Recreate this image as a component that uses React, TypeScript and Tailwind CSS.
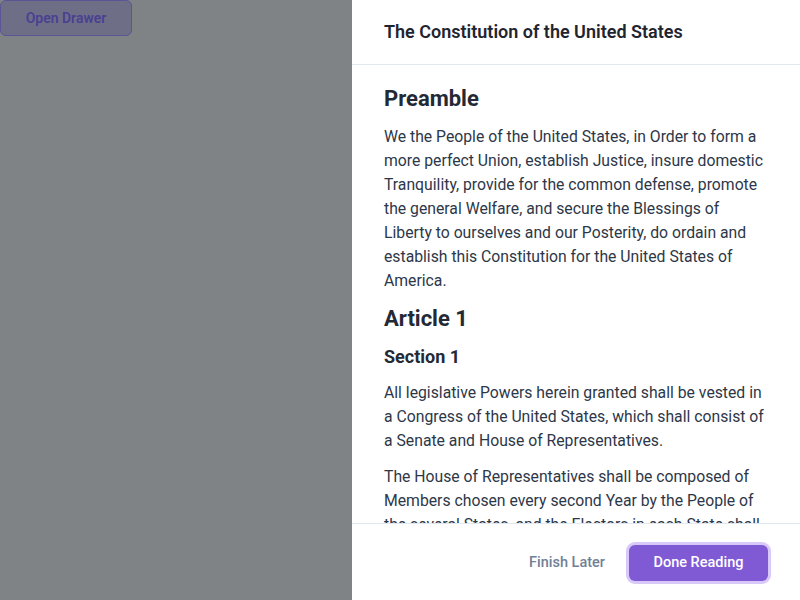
import React from "react";

export default function App() {
  return (
    <div className="relative w-[800px] h-[600px] overflow-hidden bg-white" style={{ fontFamily: "Roboto, 'Liberation Sans', sans-serif" }}>
      <div className="absolute inset-0 bg-[rgba(0,8,14,0.5)]" />
      <div className="relative">
        <button className="h-9 w-[132px] rounded-md border border-[#5a5696] bg-[#6e6f87] text-[14px] font-semibold text-[#4a3f92]">
          Open Drawer
        </button>
      </div>
      <div className="absolute top-0 right-0 h-[600px] w-[448px] bg-white flex flex-col text-[#1a202c]">
        <div className="h-[65px] shrink-0 border-b border-[#e2e8f0] px-8 flex items-center">
          <h1 className="text-[18px] font-semibold leading-7 text-[#1f2530] pb-px">The Constitution of the United States</h1>
        </div>
        <div className="flex-1 overflow-hidden px-8 pt-[18px] text-[15.75px] leading-6 text-[#2d3748]">
          <h2 className="text-[22px] font-bold leading-8 text-[#232a36]">Preamble</h2>
          <p className="mt-[10px]">
            We the People of the United States, in Order to form a more perfect Union, establish Justice, insure domestic Tranquility, provide for the common defense, promote the general Welfare, and secure the Blessings of Liberty to ourselves and our Posterity, do ordain and establish this Constitution for the United States of America.
          </p>
          <h2 className="mt-[10px] text-[22px] font-bold leading-8 text-[#232a36]">Article 1</h2>
          <h3 className="mt-[10px] text-[18px] font-bold leading-6 text-[#232a36]">Section 1</h3>
          <p className="mt-[12px]">
            All legislative Powers herein granted shall be vested in a Congress of the United States, which shall consist of a Senate and House of Representatives.
          </p>
          <p className="mt-[12px]">
            The House of Representatives shall be composed of Members chosen every second Year by the People of the several States, and the Electors in each State shall have the Qualifications requisite for Electors of the most numerous Branch of the State Legislature.
          </p>
        </div>
        <div className="h-[77px] shrink-0 border-t border-[#e2e8f0] px-8 flex items-center justify-end gap-2 pt-px">
          <button className="h-9 px-4 rounded-md text-[14.5px] font-medium text-[#718096]">Finish Later</button>
          <button className="h-9 w-[139px] rounded-md bg-[#805ad5] text-[14.5px] font-medium text-white ring-[3px] ring-[#d9c9fa]">Done Reading</button>
        </div>
      </div>
    </div>
  );
}
